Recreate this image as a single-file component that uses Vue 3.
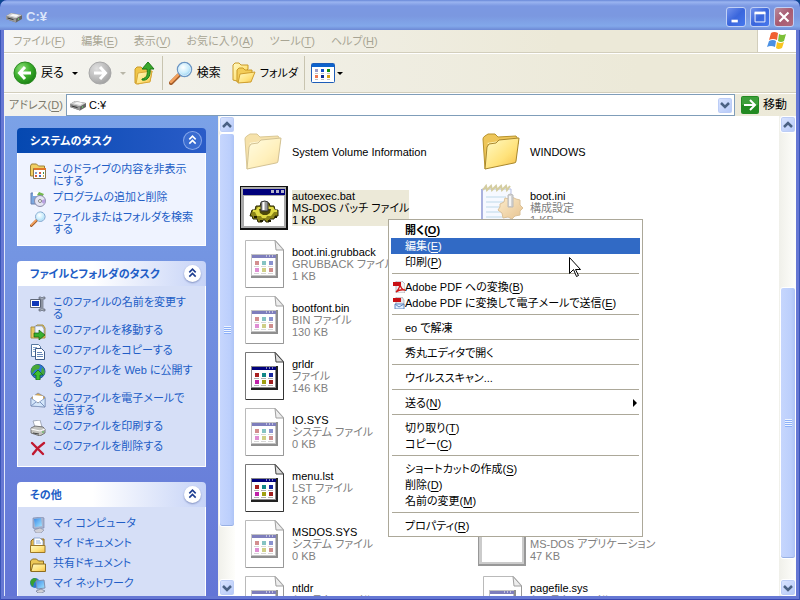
<script setup>
const menus = [
  ['ファイル', 'F'], ['編集', 'E'], ['表示', 'V'], ['お気に入り', 'A'], ['ツール', 'T'], ['ヘルプ', 'H'],
]

const panels = [
  {
    title: 'システムのタスク', primary: true,
    items: [
      ['folder-view', 'このドライブの内容を非表示\nにする'],
      ['programs', 'プログラムの追加と削除'],
      ['search', 'ファイルまたはフォルダを検索\nする'],
    ],
  },
  {
    title: 'ファイルとフォルダのタスク',
    items: [
      ['rename', 'このファイルの名前を変更す\nる'],
      ['move', 'このファイルを移動する'],
      ['copy', 'このファイルをコピーする'],
      ['publish', 'このファイルを Web に公開す\nる'],
      ['mail', 'このファイルを電子メールで\n送信する'],
      ['print', 'このファイルを印刷する'],
      ['delete', 'このファイルを削除する'],
    ],
  },
  {
    title: 'その他',
    items: [
      ['computer', 'マイ コンピュータ'],
      ['documents', 'マイ ドキュメント'],
      ['small-folder', '共有ドキュメント'],
      ['network', 'マイ ネットワーク'],
    ],
  },
]

const files = [
  { name: 'System Volume Information', icon: 'folder', hidden: true },
  { name: 'WINDOWS', icon: 'folder' },
  { name: 'autoexec.bat', type: 'MS-DOS バッチ ファイル', size: '1 KB', icon: 'batch', selected: true },
  { name: 'boot.ini', type: '構成設定', size: '1 KB', icon: 'config', hidden: true },
  { name: 'boot.ini.grubback', type: 'GRUBBACK ファイル', size: '1 KB', icon: 'page', hidden: true },
  null,
  { name: 'bootfont.bin', type: 'BIN ファイル', size: '130 KB', icon: 'page', hidden: true },
  null,
  { name: 'grldr', type: 'ファイル', size: '146 KB', icon: 'page' },
  null,
  { name: 'IO.SYS', type: 'システム ファイル', size: '0 KB', icon: 'page', hidden: true },
  null,
  { name: 'menu.lst', type: 'LST ファイル', size: '2 KB', icon: 'page' },
  null,
  { name: 'MSDOS.SYS', type: 'システム ファイル', size: '0 KB', icon: 'page', hidden: true },
  { name: 'NTDETECT.COM', type: 'MS-DOS アプリケーション', size: '47 KB', icon: 'dosapp', hidden: true },
  { name: 'ntldr', type: 'システム ファイル', size: '245 KB', icon: 'page', hidden: true },
  { name: 'pagefile.sys', type: 'システム ファイル', size: '768 KB', icon: 'page', hidden: true },
]

const contextGroups = [
  [{ text: '開く', key: 'O', bold: true }, { text: '編集', key: 'E', active: true }, { text: '印刷', key: 'P' }],
  [{ text: 'Adobe PDF への変換', key: 'B', icon: 'pdf' }, { text: 'Adobe PDF に変換して電子メールで送信', key: 'E', icon: 'pdf-mail' }],
  [{ text: 'eo で解凍' }],
  [{ text: '秀丸エディタで開く' }],
  [{ text: 'ウイルススキャン...' }],
  [{ text: '送る', key: 'N', sub: true }],
  [{ text: '切り取り', key: 'T' }, { text: 'コピー', key: 'C' }],
  [{ text: 'ショートカットの作成', key: 'S' }, { text: '削除', key: 'D' }, { text: '名前の変更', key: 'M' }],
  [{ text: 'プロパティ', key: 'R' }],
]
</script>

<template>
  <div class="desktop">
    <svg class="sprite" aria-hidden="true">
      <defs>
        <linearGradient id="gFolder" x1="0" y1="0" x2="1" y2="1">
          <stop offset="0" stop-color="#fffbc8" /><stop offset=".6" stop-color="#ffe27a" /><stop offset="1" stop-color="#f3bb45" />
        </linearGradient>
        <radialGradient id="gGreen" cx=".35" cy=".3" r=".8">
          <stop offset="0" stop-color="#8ee07a" /><stop offset=".5" stop-color="#3cae2c" /><stop offset="1" stop-color="#157a10" />
        </radialGradient>
        <radialGradient id="gGrey" cx=".35" cy=".3" r=".8">
          <stop offset="0" stop-color="#e0e0e0" /><stop offset=".6" stop-color="#b9b9b9" /><stop offset="1" stop-color="#9c9c9c" />
        </radialGradient>
        <radialGradient id="gLens" cx=".4" cy=".35" r=".7">
          <stop offset="0" stop-color="#fff" /><stop offset=".6" stop-color="#c8ecfc" /><stop offset="1" stop-color="#86c4ee" />
        </radialGradient>
        <linearGradient id="gScreen" x1="0" y1="0" x2="1" y2="1">
          <stop offset="0" stop-color="#3a8ae8" /><stop offset="1" stop-color="#a4e6ff" />
        </linearGradient>
        <linearGradient id="gGear" x1="0" y1="0" x2="1" y2="1">
          <stop offset="0" stop-color="#fbdc9c" /><stop offset="1" stop-color="#d08824" />
        </linearGradient>
      </defs>

      <symbol id="drive" viewBox="0 0 16 16">
        <path d="M0 7 5 4l11 2v4l-6 3.500L0 10z" fill="#666" />
        <path d="M0 7 5 4l11 2-6 3.500z" fill="#cfcfcf" />
        <path d="m4 6.500 3-1.500 6 1.300-3 1.700z" fill="#f8f8f8" />
        <path d="m0 7 10 2.500v4L0 10z" fill="#999" />
        <path d="m1.500 9 6 1.600" stroke="#333" />
        <path d="M12 10h1" stroke="#6f6" />
      </symbol>

      <symbol id="back" viewBox="0 0 24 24">
        <circle cx="12" cy="12" r="11" fill="url(#gGreen)" stroke="#2b8a22" />
        <path d="M12 6 6.500 12 12 18M7 12h11" fill="none" stroke="#fff" stroke-width="3" />
      </symbol>
      <symbol id="forward" viewBox="0 0 24 24">
        <circle cx="12" cy="12" r="11" fill="url(#gGrey)" stroke="#a8a8a8" />
        <path d="m12 6 5.500 6L12 18M17 12H6" fill="none" stroke="#fff" stroke-width="3" />
      </symbol>
      <symbol id="up" viewBox="0 0 24 24">
        <path d="M1 22V8l2-2h4l2 2h7v3l2-1-2 10-12 3z" fill="#f0c648" stroke="#c99a28" />
        <path d="m2 23 2-11 14-2-2 11z" fill="url(#gFolder)" stroke="#d8a838" />
        <path d="M8 18c5-1 6-5 5-10H8l6-7 6 7h-4c1 8-3 12-8 11z" fill="#3aa82c" stroke="#1c7a16" />
      </symbol>
      <symbol id="search" viewBox="0 0 24 24">
        <path d="m2 22 8-8" stroke="#a05a28" stroke-width="4" stroke-linecap="round" />
        <path d="m2 21 7-7" stroke="#f2a05c" stroke-width="2.500" stroke-linecap="round" />
        <circle cx="15.500" cy="8.500" r="7" fill="url(#gLens)" stroke="#6c96c4" stroke-width="1.500" />
        <circle cx="15.500" cy="8.500" r="6" fill="none" stroke="#d8f0fc" />
      </symbol>
      <symbol id="folders" viewBox="0 0 24 24">
        <path d="M1 19V4l2-2h4l2 2h7v4L5 20z" fill="url(#gFolder)" stroke="#c99a28" />
        <path d="M5 21V9l2-2h4l2 2h7v3l-4 9z" fill="#f3cd58" stroke="#c99a28" />
        <path d="m6 22 2-9 15-2-4 10z" fill="url(#gFolder)" stroke="#cf9f2f" />
      </symbol>
      <symbol id="views" viewBox="0 0 24 20">
        <rect x=".5" y=".5" width="23" height="19" rx="1" fill="#fff" stroke="#1c5cb8" />
        <path d="M1 1h22v3H1z" fill="#0c62cc" />
        <path d="M4 6h3v3H4z" fill="#9c9cc8" /><path d="M10 6h3v3h-3z" fill="#1450c8" /><path d="M16 6h3v3h-3z" fill="#109010" />
        <path d="M4 12h3v3H4z" fill="#f07850" /><path d="M10 12h3v3h-3z" fill="#0c2c90" /><path d="M16 12h3v3h-3z" fill="#d8a010" />
        <path d="M4 10.500h3m3 0h3m3 0h3M4 16.500h3m3 0h3m3 0h3" stroke="#c0c0c0" />
      </symbol>
      <symbol id="flag" viewBox="0 0 20 20">
        <path d="M4 2q3-2 7 0L10 9Q6 7 2 9z" fill="#f06030" />
        <path d="M12 3q3 2 7 0l-2 7q-3 2-6 0z" fill="#7cc038" />
        <path d="M2 10q4-2 7 0l-1 6q-4-2-8 0z" fill="#4a90e4" />
        <path d="M10 11q3 2 7 0l-2 6q-4 2-6 0z" fill="#f8c420" />
      </symbol>
      <symbol id="go" viewBox="0 0 18 18">
        <rect width="18" height="18" rx="2" fill="#238a22" />
        <path d="M1 1h16v8H1z" fill="#58b452" opacity=".5" />
        <path d="m9 4 5 5-5 5M13 9H3" fill="none" stroke="#fff" stroke-width="2" />
      </symbol>

      <symbol id="folder-view" viewBox="0 0 16 16">
        <path d="M.5 13V3l1-2h5l2 2h6v10z" fill="#f0cf62" stroke="#9c8038" />
        <path d="M3.500 5.500h12v10h-12z" fill="#fff" stroke="#8c7448" /><path d="M4 5h12v2H4z" fill="#e0762c" />
        <path d="M5 9h2v2H5z" fill="#7c9cd8" /><path d="M9 9h2v2H9z" fill="#d85838" /><path d="M13 9h1v2h-1z" fill="#409048" />
        <path d="M5 12h2v2H5z" fill="#d85838" /><path d="M9 12h2v2H9z" fill="#4070c8" /><path d="M13 12h1v2h-1z" fill="#d8a840" />
      </symbol>
      <symbol id="programs" viewBox="0 0 16 16">
        <path d="M1 2h9l2 2v9H1z" fill="#7ca8e0" stroke="#6880b0" /><path d="M3 1h6v4H3z" fill="#fff" />
        <path d="m9 1 5 2-2 3-5-2z" fill="#74b850" />
        <circle cx="10" cy="10" r="5.500" fill="#e4e4f4" stroke="#8c8ca8" /><path d="m10 10 5-2a5 5 0 0 1-1 5z" fill="#b8a0e0" /><circle cx="10" cy="10" r="1.500" fill="#fff" stroke="#888" />
      </symbol>
      <symbol id="rename" viewBox="0 0 16 16">
        <path d="M.5 3.500h10v8H.5z" fill="#fff" stroke="#606878" /><path d="M2 5h7v5H2z" fill="#1038b8" />
        <path d="M9 1h2l1 1 1-1h2v2h-2v10h2v2h-2l-1-1-1 1H9v-2h2V3H9z" fill="#a4acb8" stroke="#505868" stroke-width=".6" />
      </symbol>
      <symbol id="move" viewBox="0 0 16 16">
        <path d="M1 3h4l2-2h6l2 3v10H1z" fill="#e8c860" stroke="#a89040" /><path d="M5 2h7l2 3v6H5z" fill="#eef4ff" stroke="#7888b0" stroke-width=".7" />
        <path d="M4 9h5V6l6 5-6 5v-3H4z" fill="#38b030" stroke="#145c10" stroke-width=".7" />
      </symbol>
      <symbol id="copy" viewBox="0 0 16 16">
        <path d="M1.500.5h7l2 2v10h-9z" fill="#fff" stroke="#5878a0" /><path d="M3 3.500h4M3 5.500h4M3 7.500h4" stroke="#88a8d0" />
        <path d="M5.500 4.500h6l3 3v8h-9z" fill="#fff" stroke="#405c88" /><path d="M7 8.500h5M7 10.500h6M7 12.500h6" stroke="#6888b8" />
      </symbol>
      <symbol id="publish" viewBox="0 0 16 16">
        <circle cx="8" cy="7.500" r="7" fill="#2c78d8" stroke="#285898" />
        <path d="M3 2q5-3 7 0l-1 3-4 1-3 4Q0 5 3 2m9 1q4 4 2 8l-3-2z" fill="#48a838" />
        <path d="m8 6 5 5h-3v5H6v-5H3z" fill="#40c030" stroke="#14681c" stroke-width=".8" />
      </symbol>
      <symbol id="mail" viewBox="0 0 16 16">
        <path d="m1 6 7-5 7 4v10L1 14z" fill="#d8a850" stroke="#7c88a8" stroke-width=".7" /><path d="m3 3 10 1v6H3z" fill="#fff" />
        <path d="m1 6 7 5 7-5v9L1 14z" fill="#d4e6fa" stroke="#7c94c0" stroke-width=".8" /><path d="m1 14 5-4m9 5-5-5" stroke="#7c94c0" />
      </symbol>
      <symbol id="print" viewBox="0 0 16 16">
        <path d="m3 1 7-1 2 7H5z" fill="#fff" stroke="#8890a0" stroke-width=".7" />
        <path d="m1 8 4-2 8 1 2 2v4l-5 3-9-3z" fill="#c4c4c0" stroke="#606060" stroke-width=".8" />
        <path d="m1 9 9 2 5-2" fill="none" stroke="#fff" /><path d="m3 13 6 1" stroke="#444" /><path d="M12 12h2" stroke="#40b040" />
      </symbol>
      <symbol id="delete" viewBox="0 0 16 16">
        <path d="M2 3q5 5 11 11M14 3Q8 7 3 14" fill="none" stroke="#c01830" stroke-width="2.400" stroke-linecap="round" />
      </symbol>
      <symbol id="computer" viewBox="0 0 16 16">
        <path d="m3 1 9-1 2 1v10l-9 1-2-1z" fill="#a8b4d0" stroke="#7080a8" stroke-width=".6" /><path d="m4 2 7-1 1 8-7 1z" fill="url(#gScreen)" />
        <path d="m4 13 6-2 4 2-3 3H6z" fill="#d0d0d8" stroke="#8088a0" stroke-width=".6" />
      </symbol>
      <symbol id="documents" viewBox="0 0 16 16">
        <path d="M1 14V4l2-2h11v12z" fill="#e8bc50" stroke="#8c6820" /><path d="M4 1h6l3 3v8H4z" fill="#fff" stroke="#7090c0" stroke-width=".7" /><path d="M6 4h4M6 6h5" stroke="#90b0e0" />
        <path d="M.5 8.500H15v7H.5z" fill="url(#gFolder)" stroke="#9c7828" />
      </symbol>
      <symbol id="small-folder" viewBox="0 0 16 16">
        <path d="M.5 14V4l2-2h4l2 2h5v10z" fill="#ecc858" stroke="#8c6c20" /><path d="M1 14.500 3 7h12.500v7.500z" fill="url(#gFolder)" stroke="#8c6c20" />
      </symbol>
      <symbol id="network" viewBox="0 0 16 16">
        <circle cx="5" cy="6" r="5" fill="#3078d0" /><path d="M1 3q4-4 6 0L4 6l-1 4Q-1 7 1 3" fill="#38a030" />
        <path d="m6 4 8-1 1 8-8 1z" fill="url(#gScreen)" stroke="#8090b0" /><path d="m6 14 5-2 4 2-3 2H8z" fill="#d0d0d8" stroke="#606c88" stroke-width=".6" />
      </symbol>

      <symbol id="folder" viewBox="0 0 48 48">
        <path d="M7 41 5 11q0-2 2-3l3-2h7l3 3 18-1 2 3v5z" fill="#eec65a" stroke="#b8932c" />
        <path d="m9 15 31-5-2 25z" fill="#fff3b0" />
        <path d="m7 41 2-22 2-3 7-1 3-3 20-2-3 23q0 2-2 2z" fill="url(#gFolder)" stroke="#a8872c" />
      </symbol>
      <symbol id="batch" viewBox="0 0 48 48">
        <path d="M0 2h48v44H0z" fill="#111" /><path d="M1 3h45v41H1z" fill="#aaa" /><path d="M4 12h40v30H4z" fill="#fff" />
        <path d="M3 5h42v6H3z" fill="#00007c" /><path d="M31 6h3v3h-3zm5 0h3v3h-3zm5 0h3v3h-3z" fill="#b4b4cc" />
        <path d="M12 26h3l1-4h4l1-3h8l1 3h4l1 4h3v6h-3l-1 3h-4l-1 3h-3l-1-2h-2l-1 2h-4l-1-3h-4l-1-3h-2z" fill="#8c8618" stroke="#2a2800" />
        <path d="M13 26h3l2-3h4l1-2h5l1 2h4l2 3h2v2h-3l-3 4h-4l-1 2h-4l-1-2h-4l-2-4h-2z" fill="#e0da44" />
        <path d="M19 25h12l-1 4-3 2h-4l-3-2z" fill="#4c480a" />
        <path d="M21 18q4-2 7 0v9h-7z" fill="#999" stroke="#333" /><path d="M23.500 18v8" stroke="#fff" stroke-width="2" />
        <path d="M14 33h3m3 4h3m5 0h3m4-4h2" stroke="#1e1c00" stroke-width="2" />
      </symbol>
      <symbol id="page" viewBox="0 0 48 48">
        <path d="M5.500.5h30l8 9v38h-38z" fill="#fff" stroke="#777" />
        <path d="M43.500 10v37.500H6" fill="none" stroke="#333" />
        <path d="M35 .5 43.500 10H36z" fill="#ddd" stroke="#444" />
        <path d="M11 14h27v24H11z" fill="#222" /><path d="M11 14h25v22H11z" fill="#888" /><path d="M12 18h23v17H12z" fill="#fff" /><path d="M12 15h24v3H12z" fill="#00007c" />
        <path d="M26 16h1m2 0h1m2 0h1" stroke="#fff" />
        <path d="M15 21h4v4h-4z" fill="#a82020" /><path d="M22 21h4v4h-4z" fill="#108888" /><path d="M29 21h4v4h-4z" fill="#1828a0" />
        <path d="M15 28h4v4h-4z" fill="#c020a8" /><path d="M22 28h4v4h-4z" fill="#a0a010" /><path d="M29 28h4v4h-4z" fill="#a02020" />
        <path d="M14 26.500h5m2 0h5m2 0h5M14 33.500h5m2 0h5m2 0h5" stroke="#b0b0b0" />
      </symbol>
      <symbol id="config" viewBox="0 0 48 48">
        <path d="M4 5h29v38H4z" fill="#eef4ff" stroke="#7080c8" /><path d="M4 5v38" stroke="#5868c0" stroke-width="2" />
        <path d="M8 13h20M8 18h20M8 23h20M8 28h20M8 33h20" stroke="#80b4d8" />
        <path d="m5 6 3-4 1 4 4-4 1 4 4-4 1 4 4-4 1 4 4-4 1 4 3-4" fill="none" stroke="#aa9c44" stroke-width="2" />
        <path d="m22 20 4-2 1-4 4 1 3-2 4 2 4 1v5l3 3-3 3v4l-5 1-3 3-4-2-5 1-1-5-4-3 2-3z" fill="url(#gGear)" stroke="#b88434" />
        <path d="M30 11q2-2 5 0v12h-5z" fill="#aaa" stroke="#777" /><path d="M32 12v10" stroke="#eee" stroke-width="2" />
      </symbol>
      <symbol id="dosapp" viewBox="0 0 48 48">
        <path d="M0 2h48v44H0z" fill="#333" /><path d="M1 3h45v41H1z" fill="#999" /><path d="M4 5h40v37H4z" fill="#fff" /><path d="M4 5h40v6H4z" fill="#00007c" />
      </symbol>
      <symbol id="pdf" viewBox="0 0 12 12">
        <path d="M3 0h6l3 3v9H3z" fill="#f2f2f4" stroke="#a0a0a8" stroke-width=".7" /><path d="M0 1h8v4H0z" fill="#c81014" />
        <path d="M3 11q4-4 4-8 1 6 5 6-5-1-9 2" fill="none" stroke="#d01818" stroke-width="1.300" />
      </symbol>
      <symbol id="pdf-mail" viewBox="0 0 12 12">
        <path d="M3 0h6l2 3v6H3z" fill="#e4e4ea" stroke="#a0a0a8" stroke-width=".7" /><path d="M0 1h8v4H0z" fill="#c81014" />
        <path d="M2 7h9v5H2z" fill="#e0eeff" stroke="#6088c0" /><path d="m2 7 4 3 5-3" fill="none" stroke="#6088c0" />
      </symbol>
    </svg>

    <main class="window">
      <header class="titlebar">
        <svg class="i16"><use href="#drive" /></svg>
        <h1>C:¥</h1>
        <button class="caption" aria-label="最小化"><svg viewBox="0 0 20 20"><path d="M5 13h7v3H5z" fill="#fff" /></svg></button>
        <button class="caption" aria-label="最大化"><svg viewBox="0 0 20 20"><path d="M4.500 5h11v10.500h-11z" fill="none" stroke="#fff" /><path d="M4 4h12v3H4z" fill="#fff" /></svg></button>
        <button class="caption close" aria-label="閉じる"><svg viewBox="0 0 20 20"><path d="m5 5 10 10M15 5 5 15" stroke="#fff" stroke-width="2.400" /></svg></button>
      </header>

      <nav class="menubar">
        <button v-for="m in menus" :key="m[1]">{{ m[0] }}(<u>{{ m[1] }}</u>)</button>
        <span class="brand"><svg><use href="#flag" /></svg></span>
      </nav>

      <div class="toolbar">
        <button><svg class="i24"><use href="#back" /></svg>戻る<i class="caret"></i></button>
        <button class="off" aria-label="進む"><svg class="i24"><use href="#forward" /></svg><i class="caret"></i></button>
        <button aria-label="上へ"><svg class="i24"><use href="#up" /></svg></button>
        <span class="divider"></span>
        <button><svg class="i24"><use href="#search" /></svg>検索</button>
        <button class="tree"><svg class="i24"><use href="#folders" /></svg>フォルダ</button>
        <span class="divider"></span>
        <button class="view" aria-label="表示"><svg class="iview"><use href="#views" /></svg><i class="caret"></i></button>
      </div>

      <form class="address" @submit.prevent>
        <label for="path">アドレス(<u>D</u>)</label>
        <div class="field">
          <svg class="i16"><use href="#drive" /></svg>
          <input id="path" type="text" value="C:¥">
          <button type="button" class="arrow" aria-label="履歴"><svg viewBox="0 0 16 16"><path d="m4 6 4 4 4-4" /></svg></button>
        </div>
        <button class="go"><svg><use href="#go" /></svg>移動</button>
      </form>

      <div class="content">
        <aside class="tasks">
          <section v-for="p in panels" :key="p.title" class="panel" :class="{ primary: p.primary }">
            <header>
              <h2>{{ p.title }}</h2>
              <button class="fold" aria-label="折りたたむ"><svg viewBox="0 0 16 16"><path d="m5 7 3-3 3 3M5 11l3-3 3 3" /></svg></button>
            </header>
            <ul>
              <li v-for="it in p.items" :key="it[0]">
                <a href="#"><svg class="i16"><use :href="'#' + it[0]" /></svg><span>{{ it[1] }}</span></a>
              </li>
            </ul>
          </section>
        </aside>

        <div class="scroll">
          <button class="arrow" aria-label="上"><svg viewBox="0 0 16 16"><path d="m4 10 4-4 4 4" /></svg></button>
          <div class="track side"><div class="thumb"><i></i></div></div>
          <button class="arrow" aria-label="下"><svg viewBox="0 0 16 16"><path d="m4 6 4 4 4-4" /></svg></button>
        </div>

        <ul class="files">
          <li v-for="(f, n) in files" :key="n" :class="f && { hidden: f.hidden, selected: f.selected }">
            <template v-if="f">
              <svg class="i48"><use :href="'#' + f.icon" /></svg>
              <p><span>{{ f.name }}</span><small v-if="f.type">{{ f.type }}</small><small v-if="f.size">{{ f.size }}</small></p>
            </template>
          </li>
        </ul>

        <div class="scroll">
          <button class="arrow" aria-label="上"><svg viewBox="0 0 16 16"><path d="m4 10 4-4 4 4" /></svg></button>
          <div class="track list"><div class="thumb"><i></i></div></div>
          <button class="arrow" aria-label="下"><svg viewBox="0 0 16 16"><path d="m4 6 4 4 4-4" /></svg></button>
        </div>
      </div>
    </main>

    <div class="context" role="menu">
      <div v-for="(g, n) in contextGroups" :key="n" class="group">
        <button v-for="c in g" :key="c.text" role="menuitem" :class="{ bold: c.bold, active: c.active }">
          <span class="mark"><svg v-if="c.icon"><use :href="'#' + c.icon" /></svg></span>
          <span>{{ c.text }}<template v-if="c.key">(<u>{{ c.key }}</u>)</template></span>
          <i v-if="c.sub" class="more"></i>
        </button>
      </div>
    </div>

    <svg class="pointer" viewBox="0 0 12 21"><path d="M.5.5v16l4-4 3 7 2-1-3-6h5z" fill="#fff" stroke="#000" /></svg>
  </div>
</template>

<style>
body { margin: 0; overflow: hidden; }
</style>

<style scoped>
* { box-sizing: border-box; }
.desktop {
  position: relative;
  height: 100vh;
  background: #0c4890;
  color: #000;
  font: 11px/12px "Liberation Sans", "Noto Sans CJK JP", sans-serif;
  font-feature-settings: "palt";
  white-space: nowrap;
}
.sprite { position: absolute; width: 0; height: 0; }
button, input { font: inherit; font-feature-settings: inherit; color: inherit; border: 0; padding: 0; margin: 0; background: none; }
button { display: flex; align-items: center; white-space: nowrap; }
ul { list-style: none; margin: 0; padding: 0; }
h1, h2, p { margin: 0; font-size: inherit; }
svg { display: block; flex: none; }
u { text-underline-offset: 2px; }
.i16 { width: 16px; height: 16px; }
.i24 { width: 24px; height: 24px; }
.i48 { width: 48px; height: 48px; }

.window {
  display: flex;
  flex-direction: column;
  height: 100%;
  padding: 0 4px 4px;
  border-radius: 7px 7px 0 0;
  background: #6678d4;
  box-shadow: inset 1px 0 #3a55b8, inset -1px 0 #3a55b8, inset 0 -1px #3a48b0;
  overflow: hidden;
}
.titlebar {
  display: flex;
  align-items: center;
  gap: 4px;
  flex: none;
  height: 30px;
  margin: 0 -4px;
  padding: 3px 6px 0;
  border-radius: 7px 7px 0 0;
  background: linear-gradient(#6888d8 0, #9ab4f0 2px, #7b98e2 6px, #7b98e0 16px, #82a8ea 26px, #6c88d4 30px);
}
.titlebar h1 { flex: 1; color: #dce6fa; font-size: 13px; line-height: 16px; }
.caption {
  width: 20px;
  height: 20px;
  border: 1px solid #c0d0f6;
  border-radius: 3px;
  background: linear-gradient(135deg, #7292ec, #3a66dc 50%, #4678ee);
}
.caption svg { width: 18px; height: 18px; }
.close { background: linear-gradient(135deg, #b88a9c, #a85a70 50%, #b06c80); }

.menubar {
  display: flex;
  flex: none;
  gap: 16px;
  height: 23px;
  padding-left: 9px;
  border-bottom: 1px solid #d2cebc;
  background: linear-gradient(90deg, #f6f6f4, #ece9d8 70%);
  color: #a8a594;
}
.brand { display: flex; align-items: center; justify-content: center; width: 39px; margin-left: auto; border-left: 1px solid #d2cebc; background: #fff; }
.brand svg { width: 20px; height: 20px; }

.toolbar {
  display: flex;
  align-items: center;
  flex: none;
  gap: 8px;
  height: 40px;
  padding-left: 9px;
  border-top: 1px solid #fff;
  border-bottom: 1px solid #d2cebc;
  background: linear-gradient(90deg, #f4f4f0, #ece9d8 80%);
  font-size: 12px;
}
.toolbar button { gap: 4px; }
.caret { border: 3px solid transparent; border-top-color: #000; border-bottom: 0; margin-left: 4px; }
.off .caret { border-top-color: #b8b6a8; }
.toolbar .off { margin-left: 2px; }
.divider { width: 1px; height: 34px; margin-left: -4px; background: #c8c4b0; }
.divider + button { margin-left: -2px; }
.toolbar .tree { margin-left: 3px; font-size: 11px; }
.toolbar .tree + .divider { margin-left: -2px; }
.view { margin-left: -1px; }
.toolbar .view { gap: 2px; }
.toolbar .view .caret { margin-left: 0; }
.iview { width: 24px; height: 20px; }

.address {
  display: flex;
  align-items: center;
  flex: none;
  gap: 4px;
  height: 23px;
  padding-left: 5px;
  border-top: 1px solid #fff;
  background: linear-gradient(90deg, #f2f2ec, #ece9d8);
}
.address label { width: 53px; color: #7c7a6c; }
.field { display: flex; align-items: center; flex: 1; height: 22px; padding: 1px 1px 1px 3px; border: 1px solid #7f9db9; background: #fff; }
.field input { flex: 1; min-width: 0; height: 18px; margin-left: 3px; outline: 0; }
.address .go { gap: 4px; width: 57px; padding-left: 2px; font-size: 12px; }
.go svg { width: 18px; height: 18px; }

.arrow {
  flex: none;
  justify-content: center;
  width: 16px;
  height: 17px;
  border: 1px solid #fff;
  border-radius: 3px;
  background: linear-gradient(135deg, #dbe5ff, #b4c8f8);
  box-shadow: inset 0 0 0 1px #bccdf6;
}
.arrow svg { width: 16px; height: 16px; }
.arrow path { fill: none; stroke: #4a6184; stroke-width: 2.5; }

.content { display: flex; flex: 1; min-height: 0; background: #fff; overflow: hidden; }
.tasks {
  flex: none;
  width: 214px;
  padding: 12px 12px 0;
  border-left: 1px solid #dfe6fa;
  background: linear-gradient(#7ba2e7, #6375d6);
  overflow: hidden;
}
.panel { margin-bottom: 15px; }
.panel header {
  display: flex;
  align-items: center;
  justify-content: space-between;
  height: 25px;
  padding: 0 5px 0 13px;
  border-radius: 4px 4px 0 0;
  background: linear-gradient(90deg, #fff 40%, #c6d3f7);
  color: #215dc6;
}
.panel ul {
  display: flex;
  flex-direction: column;
  gap: 4px;
  padding: 10px 12px 10px;
  border: 1px solid #fff;
  border-top: 0;
  background: #d6dff7;
}
.primary header { background: linear-gradient(90deg, #0548b0, #2a5cc8); color: #fff; }
.primary ul { background: #eff3ff; }
.panel a { display: flex; gap: 7px; min-height: 16px; color: #215dc6; text-decoration: none; white-space: pre; }
.fold { width: 17px; height: 17px; border-radius: 50%; background: #fff; box-shadow: 0 1px 2px #8090c0; }
.fold svg { width: 17px; height: 17px; }
.fold path { fill: none; stroke: #1c3c90; stroke-width: 1.5; }
.primary .fold { background: #3a6cd0; box-shadow: 0 0 0 1px #88a8ea; }
.primary .fold path { stroke: #fff; }

.scroll { display: flex; flex-direction: column; flex: none; width: 17px; padding-left: 1px; background: linear-gradient(90deg, #f0f0ea, #fefefb); }
.track { display: flex; flex-direction: column; flex: 1; min-height: 0; }
.track.side::after { content: ""; flex: 52; }
.track.side .thumb { flex: 394; }
.track.list::before { content: ""; flex: 155; }
.track.list .thumb { flex: 271; }
.track.list::after { content: ""; flex: 20; }
.thumb {
  display: flex;
  align-items: center;
  justify-content: center;
  border: 1px solid #fff;
  border-radius: 3px;
  background: linear-gradient(90deg, #c6d6fd, #bccffc 70%, #aec4f6);
  box-shadow: inset 0 -1px #98b0e4;
}
.thumb i { width: 7px; height: 8px; background: repeating-linear-gradient(#eef4fe 0 1px, #8cb0f8 1px 2px); }

.files { display: grid; grid-template-columns: repeat(2, 238px); grid-auto-rows: 56px; align-content: start; flex: 1; min-width: 0; padding: 8px 0 0 5px; overflow: hidden; }
.files li { display: flex; align-items: center; gap: 4px; }
.files span, .files small { display: block; font-size: 11px; }
.files small { color: #808080; }
.hidden svg { opacity: 0.5; }
.selected p { background: #ece9d8; }
.files .selected small { color: #000; }

.context {
  position: absolute;
  left: 388px;
  top: 219px;
  width: 255px;
  padding: 2px;
  border: 1px solid #aca899;
  background: #fff;
}
.group + .group::before { content: ""; display: block; height: 1px; margin: 3px 1px 5px; background: #aca899; }
.context button { width: 100%; height: 16px; }
.mark { width: 14px; padding-left: 2px; }
.mark svg { width: 12px; height: 12px; }
.bold { font-weight: 700; }
.context .active { background: #316ac5; color: #fff; }
.more { margin-left: auto; margin-right: 3px; border: 4px solid transparent; border-left-color: #000; border-right: 0; }
.pointer { position: absolute; left: 569px; top: 257px; width: 12px; height: 21px; }
</style>
